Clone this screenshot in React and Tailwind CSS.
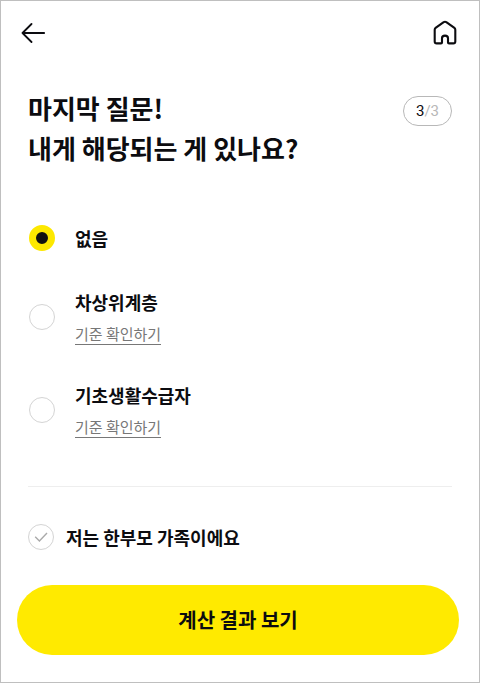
import { useState } from "react";

const OPTIONS = [
  { id: "none", label: "없음", hasCriteria: false },
  { id: "near-poverty", label: "차상위계층", hasCriteria: true },
  { id: "basic-livelihood", label: "기초생활수급자", hasCriteria: true },
];

const BackIcon = () => (
  <svg width="24" height="24" viewBox="0 0 24 24" fill="none" stroke="currentColor" strokeWidth="1.8" strokeLinecap="round" strokeLinejoin="round" aria-hidden="true">
    <path d="M23.2 12H1.5M10.5 3L1.5 12l9 9" />
  </svg>
);

const HomeIcon = () => (
  <svg width="24" height="26" viewBox="0 0 24 26" fill="none" stroke="currentColor" strokeWidth="2.1" strokeLinejoin="round" aria-hidden="true">
    <path d="M10.7 2.1 2.6 7.9Q1.7 8.6 1.7 9.8V21.4Q1.7 23.4 3.7 23.4H8Q9 23.4 9 22.4V18.2Q9 15.6 12 15.6T15 18.2V22.4Q15 23.4 16 23.4H20.3Q22.3 23.4 22.3 21.4V9.8Q22.3 8.6 21.4 7.9L13.3 2.1Q12 1.3 10.7 2.1Z" />
  </svg>
);

const OptionRow = ({ option, checked, onChange }) => (
  <div className="flex items-center gap-5">
    <input
      type="radio"
      id={option.id}
      name="status"
      value={option.id}
      checked={checked}
      onChange={() => onChange(option.id)}
      className="size-[26px] shrink-0 appearance-none rounded-full border border-[#d4d4d4] bg-white checked:border-[7px] checked:border-[#fde800] checked:bg-[#111111]"
    />
    <div className="flex flex-col items-start gap-2">
      <label htmlFor={option.id} className="text-lg font-bold">
        {option.label}
      </label>
      {option.hasCriteria && (
        <a href="#criteria" className="border-b border-[#777777] text-[15px] leading-5 text-[#777777]">
          기준 확인하기
        </a>
      )}
    </div>
  </div>
);

const App = () => {
  const [status, setStatus] = useState("none");
  const [singleParent, setSingleParent] = useState(false);

  return (
    <div className="min-h-screen border border-[#bfbfbf] bg-white font-['Noto_Sans_CJK_KR',sans-serif] text-[#0c0c10]">
      <header className="flex h-16 items-center justify-between pr-[22px] pl-5">
        <button type="button" aria-label="뒤로">
          <BackIcon />
        </button>
        <button type="button" aria-label="홈">
          <HomeIcon />
        </button>
      </header>

      <form onSubmit={(e) => e.preventDefault()} className="pt-[23px]">
        <div className="px-[27px]">
          <div className="flex items-start justify-between">
            <h1 className="text-[26px] leading-10 font-bold">
              마지막 질문!
              <br />
              내게 해당되는 게 있나요?
            </h1>
            <p className="mt-2 flex h-[30px] w-[49px] items-center justify-center rounded-full border border-[#b8b8b8] font-[Roboto,sans-serif] text-[15px]">
              3<span className="text-[#b8b8b8]">/3</span>
            </p>
          </div>

          <fieldset aria-label="해당 항목" className="mt-14 flex flex-col gap-9 pl-px">
            {OPTIONS.map((option) => (
              <OptionRow
                key={option.id}
                option={option}
                checked={status === option.id}
                onChange={setStatus}
              />
            ))}
          </fieldset>

          <hr className="mt-12 border-[#eeeeee]" />

          <label className="mt-9 flex items-center gap-3 text-lg font-bold">
            <span className="grid place-items-center">
              <input
                type="checkbox"
                checked={singleParent}
                onChange={(e) => setSingleParent(e.target.checked)}
                className="col-start-1 row-start-1 size-[26px] appearance-none rounded-full border border-[#d4d4d4] checked:border-[#fde800] checked:bg-[#fde800]"
              />
              <svg
                width="14"
                height="12"
                viewBox="0 0 14 12"
                fill="none"
                strokeWidth="1.4"
                className={`pointer-events-none col-start-1 row-start-1 ${singleParent ? "stroke-[#111111]" : "stroke-[#aaaaaa]"}`}
                aria-hidden="true"
              >
                <path d="M1.2 5.8 5.4 10 13 2" />
              </svg>
            </span>
            저는 한부모 가족이에요
          </label>
        </div>

        <div className="pt-[34px] pr-5 pb-[27px] pl-4">
          <button type="submit" className="h-[70px] w-full rounded-full bg-[#ffea00] text-xl font-bold">
            계산 결과 보기
          </button>
        </div>
      </form>
    </div>
  );
};

export default App;
